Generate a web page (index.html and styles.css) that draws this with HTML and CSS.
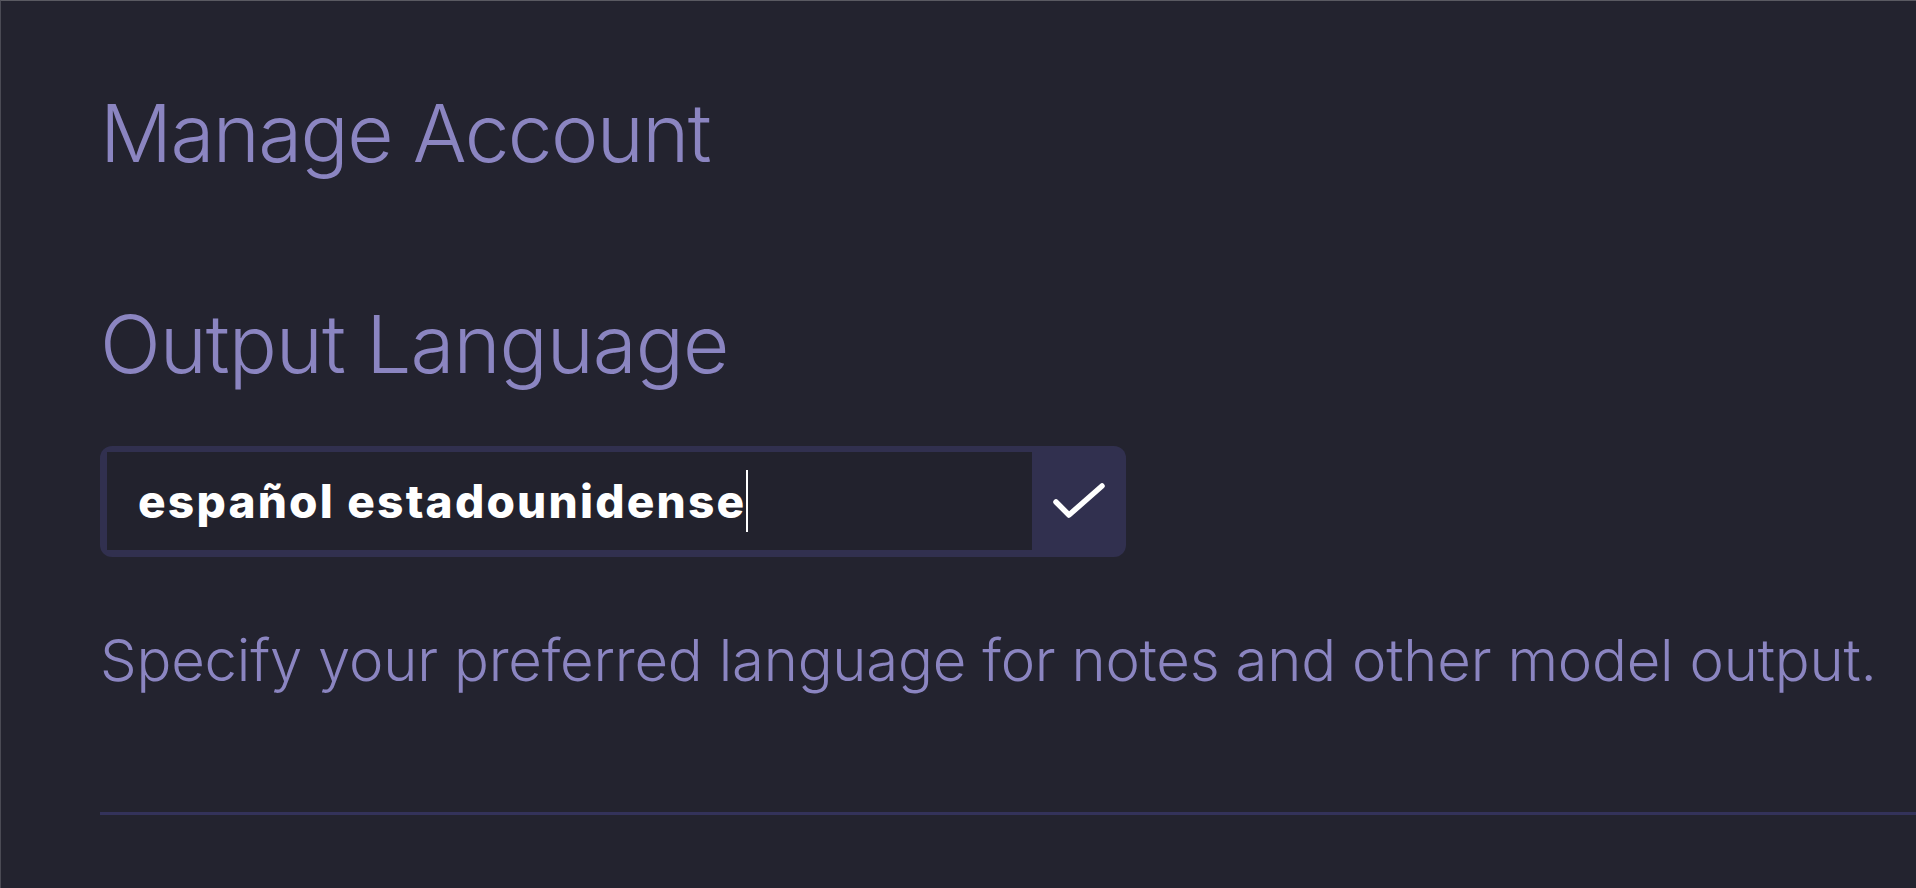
FILE: index.html
```html
<!DOCTYPE html>
<html lang="en">
<head>
    <meta charset="UTF-8">
    <meta name="viewport" content="width=device-width, initial-scale=1.0">
    <title>Manage Account</title>
    <link rel="stylesheet" href="styles.css">
</head>
<body>
    <main class="settings">
        <h1 class="page-title">Manage Account</h1>

        <section class="setting">
            <h2 class="setting-title">Output Language</h2>

            <div class="lang-field">
                <div class="lang-input">español estadounidense<span class="caret"></span></div>
                <button class="lang-save" type="button" aria-label="Save">
                    <svg width="58" height="42" viewBox="0 0 58 42" fill="none">
                        <path d="M6 22 L19 35 L52 6" stroke="#ffffff" stroke-width="5.5" stroke-linecap="round" stroke-linejoin="round"/>
                    </svg>
                </button>
            </div>

            <p class="setting-help">Specify your preferred language for notes and other model output.</p>
        </section>

        <hr class="divider">
    </main>
</body>
</html>
```

FILE: styles.css
```css
html, body {
    margin: 0;
    height: 100%;
}
body {
    background-color: #23232f;
    font-family: Inter, "Noto Sans", sans-serif;
    color: #8b85c1;
    border-top: 1px solid #5a5a62;
    border-left: 1px solid #4a4a54;
    box-sizing: border-box;
    overflow: hidden;
}
.settings {
    padding: 0 0 0 99px;
}
.page-title {
    margin: 0;
    padding-top: 84px;
    font-size: 80px;
    font-weight: 300;
    line-height: 96px;
    letter-spacing: -1.6px;
}
.setting-title {
    margin: 115px 0 0;
    font-size: 80px;
    font-weight: 300;
    line-height: 96px;
    letter-spacing: -1px;
}
.lang-field {
    display: flex;
    width: 1026px;
    height: 111px;
    margin-top: 54px;
    background-color: #31304f;
    border-radius: 12px;
    box-sizing: border-box;
    padding: 6px 0 7px 7px;
}
.lang-input {
    flex: 1;
    display: flex;
    align-items: center;
    background-color: #22222d;
    padding-left: 31px;
    color: #ffffff;
    font-size: 46px;
    font-weight: 800;
    letter-spacing: 2.2px;
}
.caret {
    display: inline-block;
    width: 2px;
    height: 62px;
    margin-left: 0;
    background-color: #ffffff;
}
.lang-save {
    width: 94px;
    border: none;
    background: none;
    padding: 0;
    display: flex;
    align-items: center;
    justify-content: center;
    cursor: pointer;
}
.setting-help {
    margin: 69px 0 0;
    font-size: 58px;
    font-weight: 300;
    line-height: 68px;
    letter-spacing: -0.2px;
}
.divider {
    margin: 118px 0 0;
    border: none;
    height: 3px;
    background-color: #33325a;
}
```
